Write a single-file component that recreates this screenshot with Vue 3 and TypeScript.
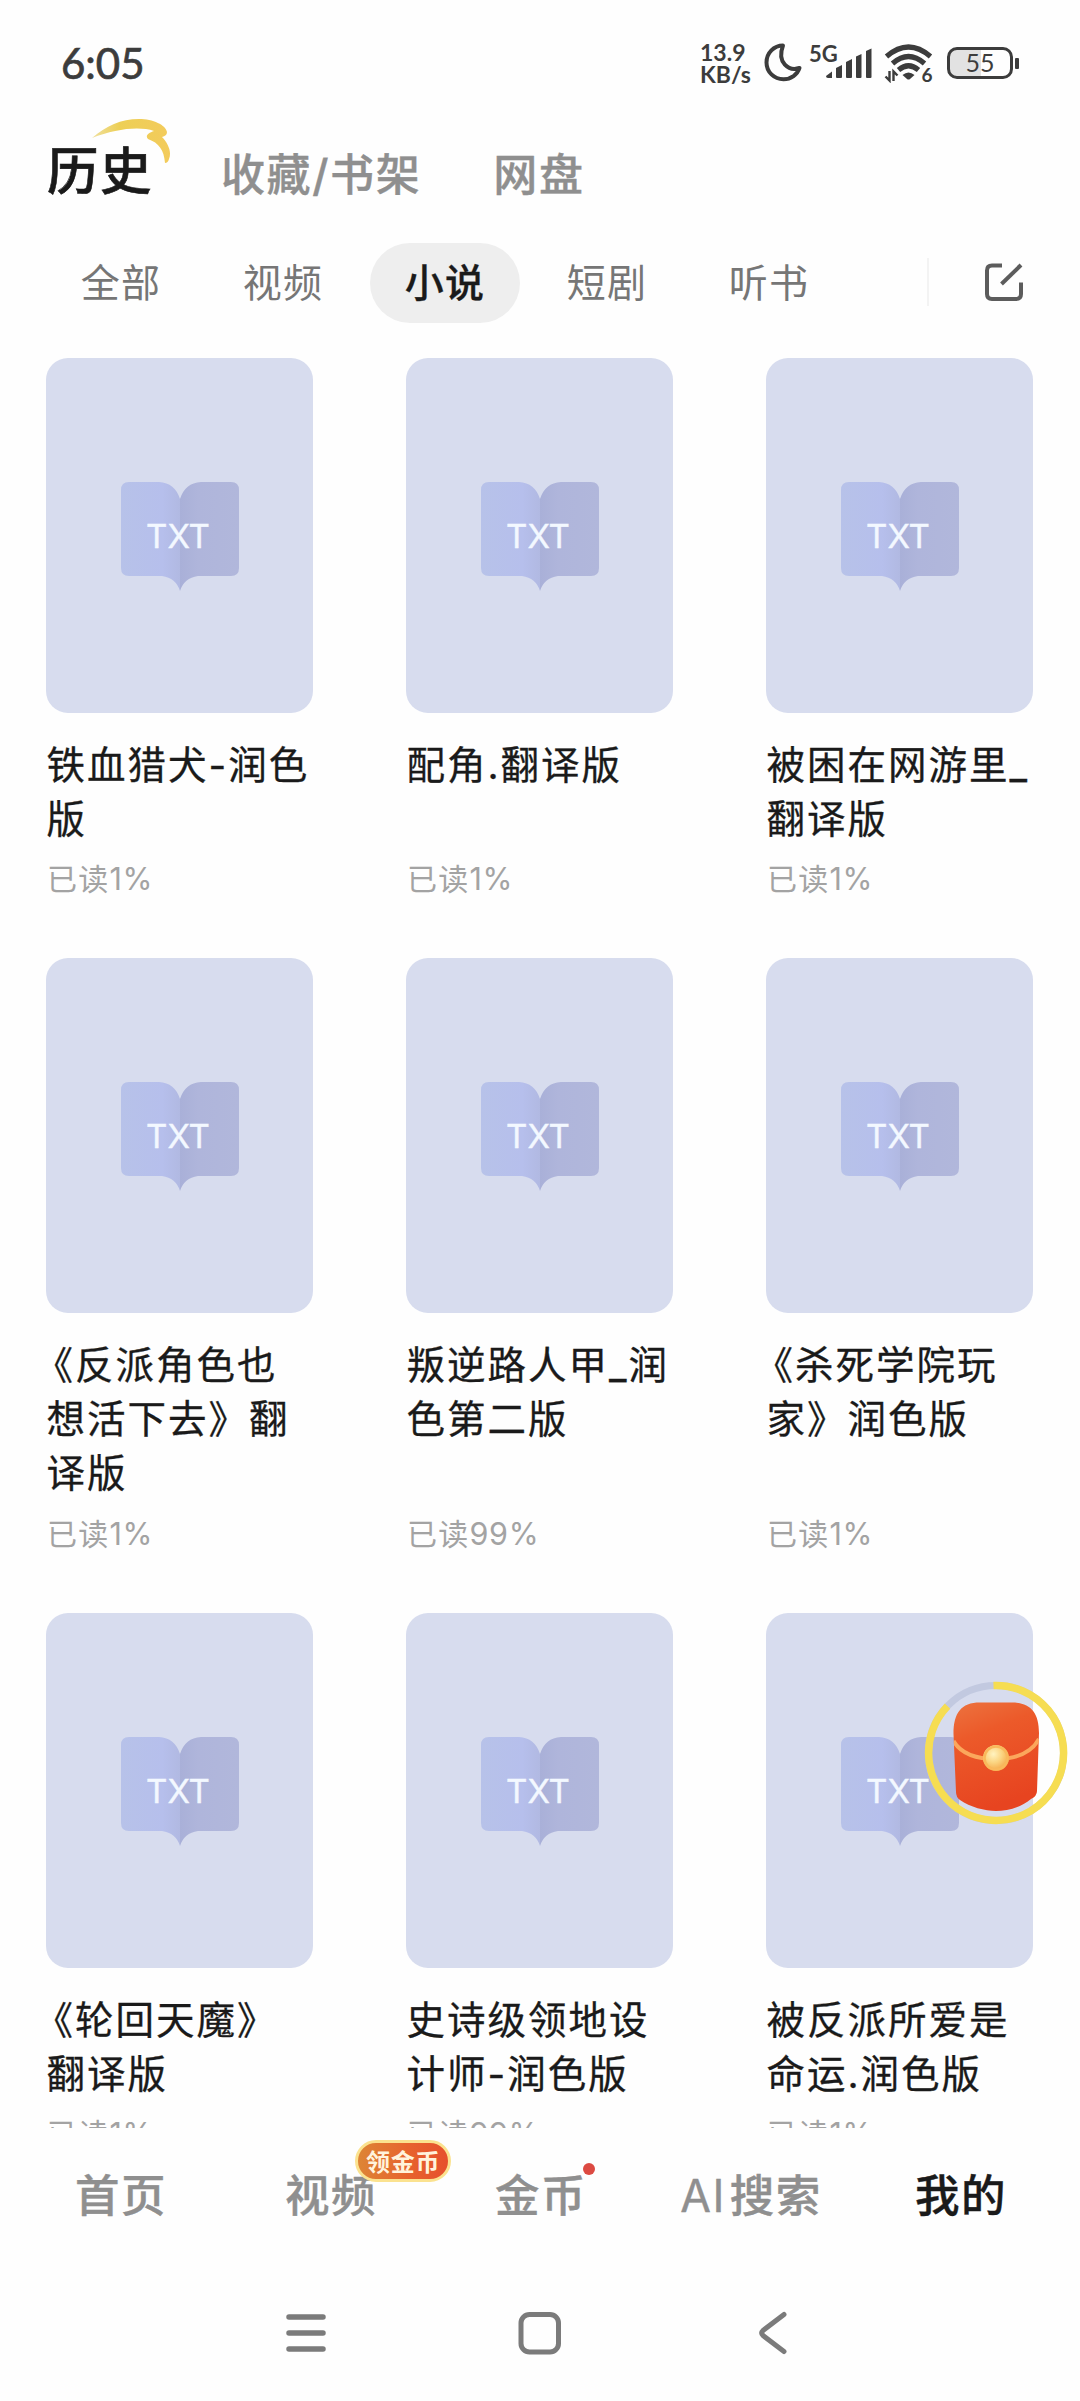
<script setup lang="ts">
interface Book {
  lines: string[]
  progress: string
}

const topTabs: string[] = ['历史', '收藏/书架', '网盘']
const filters: string[] = ['全部', '视频', '小说', '短剧', '听书']
const activeFilter = '小说'

const books: Book[] = [
  { lines: ['铁血猎犬-润色', '版'], progress: '1%' },
  { lines: ['配角.翻译版'], progress: '1%' },
  { lines: ['被困在网游里_', '翻译版'], progress: '1%' },
  { lines: ['《反派角色也', '想活下去》翻', '译版'], progress: '1%' },
  { lines: ['叛逆路人甲_润', '色第二版'], progress: '99%' },
  { lines: ['《杀死学院玩', '家》润色版'], progress: '1%' },
  { lines: ['《轮回天魔》', '翻译版'], progress: '1%' },
  { lines: ['史诗级领地设', '计师-润色版'], progress: '99%' },
  { lines: ['被反派所爱是', '命运.润色版'], progress: '1%' },
]

const navItems: { latin?: string; label: string; badge?: string; dot?: boolean }[] = [
  { label: '首页' },
  { label: '视频', badge: '领金币' },
  { label: '金币', dot: true },
  { latin: 'AI', label: '搜索' },
  { label: '我的' },
]
</script>

<template>
  <div class="screen">
    <header class="status">
      <span class="clock">6:05</span>
      <div class="indicators">
        <div class="speed"><span>13.9</span><span>KB/s</span></div>
        <svg class="moon" width="38" height="40" viewBox="0 0 38 40">
          <path d="M19 3.500 C10 3.500 2.500 11 2.500 20.500 C2.500 30 10 37.200 19.500 37.200 C27 37.200 33.500 32.500 35.500 26 C25 29.500 12.500 21 19 3.500 Z" fill="none" stroke="#3c3c3c" stroke-width="4" stroke-linejoin="round" />
        </svg>
        <div class="signal">
          <span class="gen">5G</span>
          <svg width="48" height="32" viewBox="0 0 48 32" fill="#3c3c3c">
            <path d="M1 28 L7 23.500 V30 H3 Q1 30 1 28Z" />
            <path d="M11 20 L17 17 V29 Q17 30 16 30 H12 Q11 30 11 29Z" />
            <path d="M21 14 L27 11 V29 Q27 30 26 30 H22 Q21 30 21 29Z" />
            <path d="M31 8.500 L36.500 6 V29 Q36.500 30 35.500 30 H32 Q31 30 31 29Z" />
            <path d="M41 3 L46.500 0.500 V29 Q46.500 30 45.500 30 H42 Q41 30 41 29Z" />
          </svg>
        </div>
        <svg class="wifi" width="50" height="40" viewBox="0 0 50 40">
          <g fill="none" stroke="#3c3c3c" stroke-width="5.200">
            <path d="M2.500 13.500 Q24.500 -5.500 46.500 13.500" />
            <path d="M8.500 20.500 Q24.500 6.500 40.500 20.500" />
            <path d="M14.500 27 Q24.500 18.500 34.500 27" />
          </g>
          <path d="M18.500 32 Q24.500 27 30.500 32 L26 36 Q24.500 37 23 36Z" fill="#3c3c3c" />
          <path d="M5.500 28 V37.500 L1.500 33.500 M9.500 38 V28.500 L13.500 32.500" fill="none" stroke="#3c3c3c" stroke-width="2.400" />
          <text x="37.500" y="38.500" class="wifi-six">6</text>
        </svg>
        <div class="battery"><div class="cell"><span>55</span></div><i></i></div>
      </div>
    </header>

    <nav class="tabs">
      <span v-for="(t, i) in topTabs" :key="t" class="tab" :class="{ current: i === 0 }">
        {{ t }}
        <svg v-if="i === 0" class="swoosh" width="80" height="46" viewBox="0 0 80 46">
          <defs>
            <linearGradient id="sw" x1="0" x2="1"><stop offset="0" stop-color="#efe0a0" /><stop offset=".35" stop-color="#edcf55" /><stop offset="1" stop-color="#f3cb5c" /></linearGradient>
          </defs>
          <path d="M1 20 C15 8 30 1 48 1 C62 1 75 7 76 14 C76 17 74 18 71 19 C77 25 81 34 78 41 Q77 45 74 45 C73 32 68 25 57 21 C54 18 57 15 63 13 C48 8 24 11 1 20Z" fill="url(#sw)" />
        </svg>
      </span>
    </nav>

    <div class="filters">
      <span v-for="f in filters" :key="f" class="filter" :class="{ on: f === activeFilter }">{{ f }}</span>
      <i class="divider"></i>
      <svg class="edit" width="42" height="42" viewBox="0 0 42 42" fill="none" stroke="#5c5c5c" stroke-width="4">
        <path d="M19 4.500 H9 Q4 4.500 4 9.500 V33 Q4 38 9 38 H33 Q38 38 38 33 V21.500" stroke-linejoin="round" />
        <path d="M18.500 23 L38 4" />
      </svg>
    </div>

    <main class="shelf">
      <article v-for="(b, i) in books" :key="i" class="book">
        <div class="cover">
          <svg class="open-book" width="118" height="110" viewBox="0 0 118 110">
            <defs>
              <linearGradient id="lp" x1="0" x2="1"><stop offset="0" stop-color="#b7c2e9" /><stop offset=".7" stop-color="#b6bfec" /><stop offset="1" stop-color="#b1b9e2" /></linearGradient>
              <linearGradient id="rp" x1="0" x2="1"><stop offset="0" stop-color="#a9b0d8" /><stop offset=".3" stop-color="#afb5db" /><stop offset="1" stop-color="#b1b7db" /></linearGradient>
            </defs>
            <path d="M8 0 H38 Q54 1 59 17 V109 Q55 96 41 94 H8 Q0 94 0 86 V8 Q0 0 8 0Z" fill="url(#lp)" />
            <path d="M110 0 H80 Q64 1 59 17 V109 Q63 96 77 94 H110 Q118 94 118 86 V8 Q118 0 110 0Z" fill="url(#rp)" />
            <text x="57" y="65.500" text-anchor="middle" class="txt">TXT</text>
          </svg>
        </div>
        <h3 class="title">
          <span v-for="l in b.lines" :key="l" :class="{ hang: l.startsWith('《') }">{{ l }}</span>
        </h3>
        <p class="meta">已读<b>{{ b.progress }}</b></p>
      </article>
    </main>

    <nav class="bottom">
      <div v-for="(n, i) in navItems" :key="n.label" class="nav-item" :class="{ mine: i === 4 }">
        <span class="nav-label"><span v-if="n.latin" class="latin">{{ n.latin }}</span>{{ n.label }}<em v-if="n.badge" class="badge">{{ n.badge }}</em><i v-if="n.dot" class="dot"></i></span>
      </div>
    </nav>

    <footer class="system">
      <svg width="48" height="48" viewBox="0 0 48 48" fill="none" stroke="#7b7b7b" stroke-width="5.500" stroke-linecap="round"><path d="M7 8 H41 M7 24 H41 M7 40 H41" /></svg>
      <svg width="48" height="48" viewBox="0 0 48 48" fill="none" stroke="#7b7b7b" stroke-width="5"><rect x="5" y="5.500" width="37.500" height="37.500" rx="8.500" /></svg>
      <svg width="48" height="48" viewBox="0 0 48 48" fill="none" stroke="#7b7b7b" stroke-width="5" stroke-linecap="round" stroke-linejoin="round"><path d="M34 5.500 L13 21.500 Q10.500 24 13 26.500 L34 42.500" /></svg>
    </footer>

    <svg class="packet" width="144" height="144" viewBox="0 0 144 144">
      <defs>
        <linearGradient id="pk" x1="0" y1="0" x2=".3" y2="1"><stop offset="0" stop-color="#ec7440" /><stop offset=".35" stop-color="#ec5a2a" /><stop offset="1" stop-color="#e74420" /></linearGradient>
        <radialGradient id="coin" cx=".4" cy=".35" r=".65"><stop offset="0" stop-color="#fff3c0" /><stop offset=".5" stop-color="#fbd582" /><stop offset="1" stop-color="#f5a94a" /></radialGradient>
        <clipPath id="body"><path d="M56 21.500 H88 C107 21.500 115 32 115 52 L113 110 Q113 115 107 118 C96 127 83 130 72 130 C61 130 46 126 36 119 Q32 116 32 111 L29.500 53 C29.500 32 37 21.500 56 21.500Z" /></clipPath>
      </defs>
      <circle cx="72" cy="72" r="67.500" fill="none" stroke="#c2c9e0" stroke-width="7" />
      <path d="M69.500 4.500 A67.500 67.500 0 1 1 23.500 25.100" fill="none" stroke="#f6dd52" stroke-width="7.500" />
      <g clip-path="url(#body)">
        <rect x="28" y="20" width="88" height="112" fill="url(#pk)" />
        <path d="M29.500 60 Q40 78 72 78 Q104 78 115 58" fill="none" stroke="#fba75c" stroke-width="4" />
      </g>
      <circle cx="72" cy="77" r="13" fill="url(#coin)" />
      <circle cx="72" cy="77" r="11.500" fill="none" stroke="#f9b95c" stroke-width="2.500" />
    </svg>
  </div>
</template>

<style>
body {
  background: #fefefe;
}
</style>

<style scoped>
.screen {
  position: relative;
  width: 1080px;
  height: 2401px;
  overflow: hidden;
  display: flex;
  flex-direction: column;
  background: #fefefe;
  color: #1a1a1a;
  font-family: Inter, 'Noto Sans CJK SC', sans-serif;
  text-spacing-trim: space-all;
}
svg {
  display: block;
  flex: none;
}
.status {
  height: 126px;
  flex: none;
  display: flex;
  justify-content: space-between;
  padding: 0 61px 0 61px;
  color: #3c3c3c;
  font-family: Lato, sans-serif;
}
.clock {
  font-size: 42px;
  line-height: 50px;
  margin-top: 38px;
  font-weight: 400;
  -webkit-text-stroke: 0.7px #3c3c3c;
}
.indicators {
  display: flex;
  align-items: flex-start;
}
.speed {
  display: flex;
  flex-direction: column;
  width: 64px;
  margin-top: 42px;
  font: 700 23px/21.5px Lato, sans-serif;
}
.moon {
  margin-top: 42px;
}
.signal {
  display: flex;
  align-items: flex-start;
  width: 75px;
  margin-left: 7px;
  margin-top: 43px;
}
.signal svg {
  margin: 5px 0 0 -13px;
}
.gen {
  font-size: 22px;
  font-weight: 700;
  line-height: 21px;
  width: 29px;
  flex: none;
}
.wifi {
  margin: 43px 0 0 0;
}
.wifi-six {
  font: 700 19px Lato, sans-serif;
  fill: #3c3c3c;
}
.battery {
  display: flex;
  align-items: center;
  margin: 47px 0 0 13px;
}
.cell {
  width: 66px;
  height: 32px;
  box-sizing: border-box;
  border: 3.5px solid #3c3c3c;
  border-radius: 10px;
  text-align: center;
  background: linear-gradient(90deg, #e2e2e2 52%, #fefefe 52%);
  font: 400 25px/25px Lato, sans-serif;
}
.battery i {
  width: 4px;
  height: 11px;
  margin-left: 2px;
  border-radius: 1px;
  background: #3c3c3c;
}
.tabs {
  height: 94px;
  flex: none;
  display: flex;
  align-items: flex-start;
  padding-left: 47px;
}
.tab {
  position: relative;
  font-size: 44px;
  line-height: 60px;
  font-weight: 500;
  color: #8f8f8f;
  -webkit-text-stroke: 0.4px currentColor;
  letter-spacing: 1.6px;
  margin-top: 19px;
  margin-right: 72px;
}
.tab.current {
  font-size: 51.5px;
  color: #1a1a1a;
  -webkit-text-stroke: 0.6px currentColor;
  letter-spacing: 1.5px;
  margin-top: 15px;
  margin-right: 68px;
}
.swoosh {
  position: absolute;
  left: 44px;
  top: -23px;
}
.filters {
  height: 124px;
  flex: none;
  display: flex;
  align-items: center;
  padding-left: 46px;
}
.filter {
  width: 150px;
  height: 80px;
  margin: 2px 12px 0 0;
  line-height: 80px;
  border-radius: 40px;
  text-align: center;
  font-size: 39px;
  letter-spacing: 1.3px;
  color: #767676;
}
.filter.on {
  background: #eee;
  color: #1a1a1a;
  font-weight: 500;
  -webkit-text-stroke: 0.3px currentColor;
}
.divider {
  width: 2px;
  height: 48px;
  margin-left: 71px;
  background: #f3f3f3;
}
.edit {
  margin-left: 54px;
}
.shelf {
  height: 1784px;
  flex: none;
  overflow: hidden;
  box-sizing: border-box;
  padding: 13.5px 47px 0 46px;
  display: grid;
  grid-template-columns: repeat(3, 267px);
  column-gap: 93px;
  row-gap: 61px;
  align-content: start;
}
.book {
  display: flex;
  flex-direction: column;
}
.cover {
  height: 355.5px;
  border-radius: 22px;
  background: #d7dcee;
  display: flex;
  justify-content: center;
  align-items: flex-start;
}
.open-book {
  margin-top: 124.5px;
}
.txt {
  font: 400 33px Inter, sans-serif;
  fill: #f3f8ff;
  stroke: #f3f8ff;
  stroke-width: 0.4px;
}
.title {
  margin: 24.5px 0 0 0.5px;
  font-size: 38.5px;
  line-height: 54.2px;
  font-weight: 400;
  letter-spacing: 2px;
  -webkit-text-stroke: 0.3px currentColor;
}
.title span {
  display: block;
  white-space: nowrap;
}
.title .hang {
  margin-left: -12px;
}
.meta {
  margin: auto 0 0;
  padding: 15px 0 0 1px;
  font-size: 30px;
  line-height: 36px;
  letter-spacing: 1.2px;
  color: #a3a3a3;
}
.meta b {
  font-weight: 400;
  font-size: 30.5px;
  letter-spacing: 0.8px;
}
.bottom {
  height: 142px;
  flex: none;
  display: flex;
  padding: 0 14px 0 16px;
}
.nav-item {
  width: 210px;
  display: flex;
  justify-content: center;
  padding-top: 38px;
}
.nav-label {
  position: relative;
  height: 60px;
  font-size: 44.5px;
  line-height: 60px;
  font-weight: 500;
  color: #8f8f8f;
  -webkit-text-stroke: 0.4px currentColor;
  letter-spacing: 1.4px;
  white-space: nowrap;
}
.latin {
  font-weight: 400;
  margin-right: 4px;
}
.mine .nav-label {
  color: #1a1a1a;
}
.badge {
  position: absolute;
  left: 70px;
  top: -26px;
  width: 96px;
  height: 42px;
  box-sizing: border-box;
  border: 3px solid #fbe28f;
  border-radius: 21px;
  background: linear-gradient(90deg, #dd8535, #e7632e 55%, #e6502d);
  color: #fff3dc;
  text-align: center;
  font: 700 24px/35px 'Noto Sans CJK SC', sans-serif;
  letter-spacing: 0.8px;
  -webkit-text-stroke: 0;
}
.dot {
  position: absolute;
  left: 88px;
  top: -3px;
  width: 12px;
  height: 12px;
  border-radius: 50%;
  background: #dc4a42;
}
.system {
  height: 131px;
  flex: none;
  display: flex;
  align-items: flex-start;
  justify-content: center;
  gap: 186px;
  padding-top: 39px;
}
.packet {
  position: absolute;
  left: 924px;
  top: 1681px;
}
</style>
